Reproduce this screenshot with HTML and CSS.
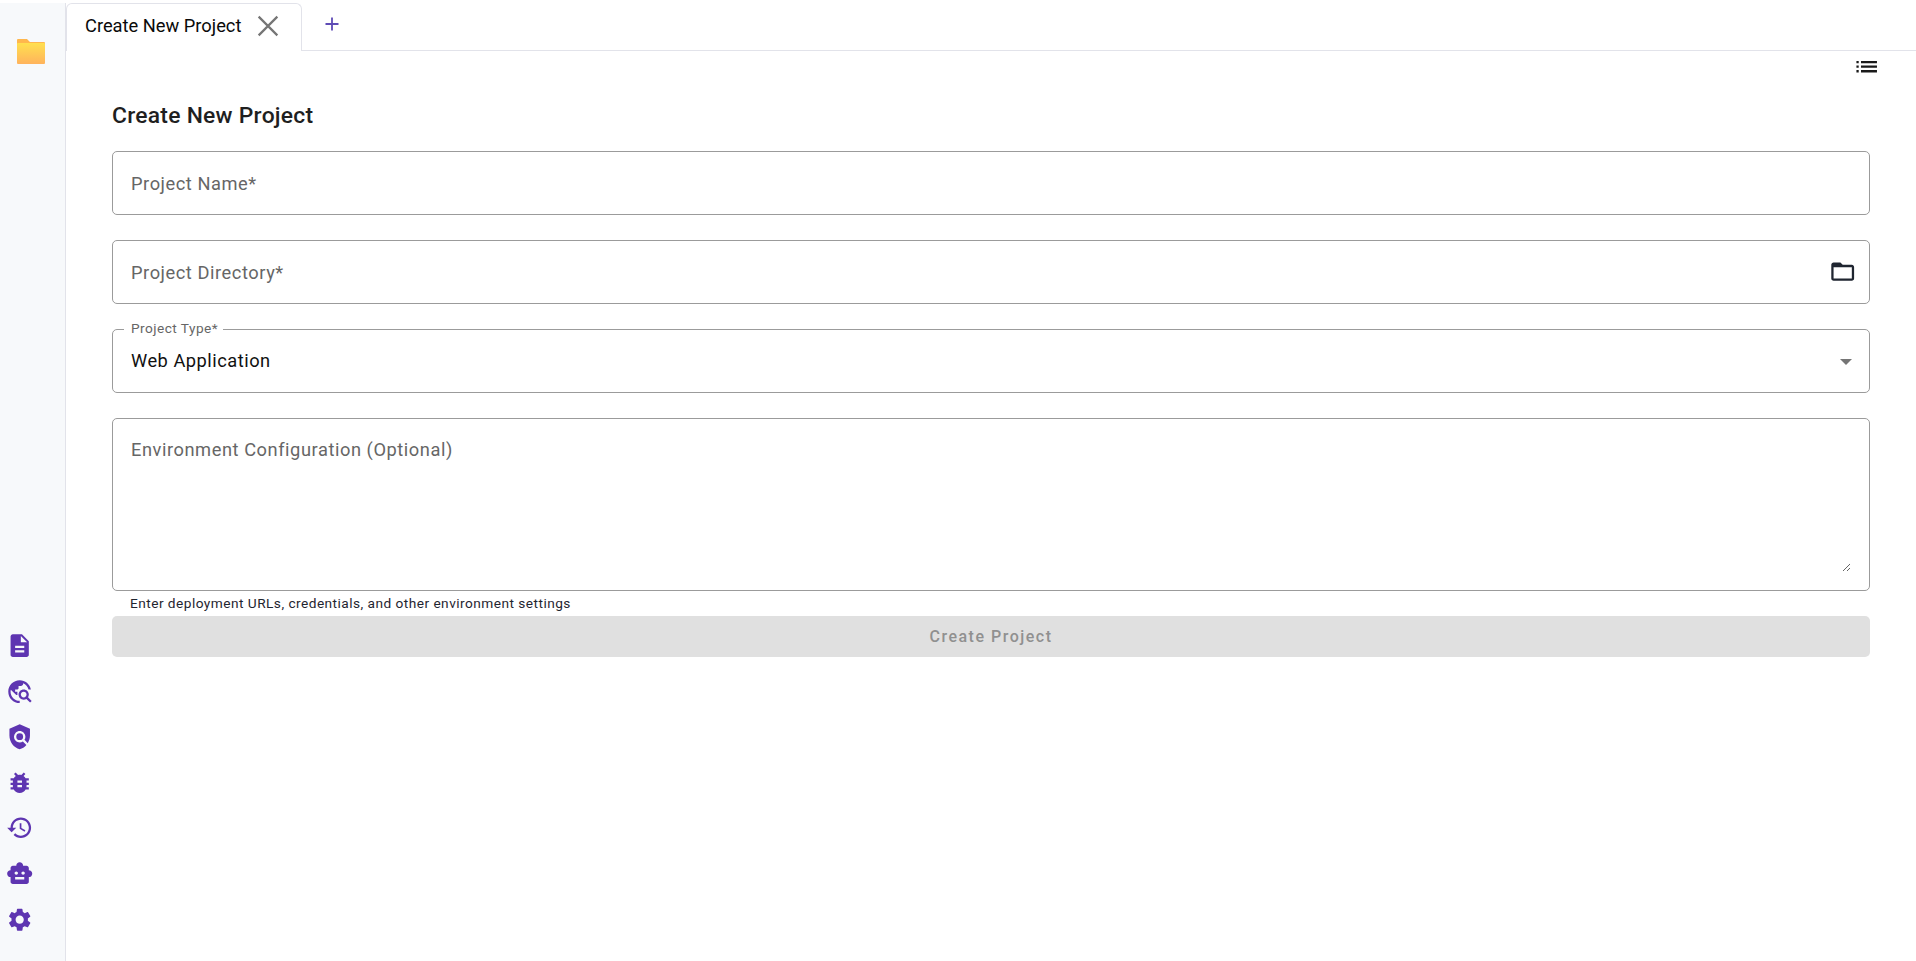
FILE: index.html
```html
<!DOCTYPE html>
<html lang="en">
<head>
<meta charset="utf-8">
<title>Create New Project</title>
<link rel="stylesheet" href="styles.css">
</head>
<body>
<div class="app">
  <aside class="sidebar">
    <svg class="logo" viewBox="0 0 28 25" aria-hidden="true">
      <defs><linearGradient id="fg" x1="0" y1="0" x2="0" y2="1"><stop offset="0" stop-color="#ffe04f"/><stop offset="1" stop-color="#ffb35c"/></linearGradient></defs>
      <path d="M1 0h9l3 3h14a1 1 0 0 1 1 1v2H0V1a1 1 0 0 1 1-1z" fill="#ffb74d"/>
      <path d="M1 4h26a1 1 0 0 1 1 1v19a1 1 0 0 1-1 1H1a1 1 0 0 1-1-1V5a1 1 0 0 1 1-1z" fill="url(#fg)"/>
    </svg>
    <nav class="side-icons">
      <svg class="side-icon" viewBox="0 0 24 24"><path d="M14 2H6c-1.1 0-1.99.9-1.99 2L4 20c0 1.1.89 2 1.99 2H18c1.1 0 2-.9 2-2V8l-6-6zm2 16H8v-2h8v2zm0-4H8v-2h8v2zm-3-5V3.5L18.5 9H13z"/></svg>
      <svg class="side-icon" viewBox="0 0 24 24"><path d="M19.3 16.9c.4-.7.7-1.5.7-2.4 0-2.5-2-4.5-4.5-4.5S11 12 11 14.5s2 4.5 4.5 4.5c.9 0 1.7-.3 2.4-.7l3.2 3.2 1.4-1.4-3.2-3.2zm-3.8.1c-1.4 0-2.5-1.1-2.5-2.5s1.1-2.5 2.5-2.5 2.5 1.1 2.5 2.5-1.1 2.5-2.5 2.5zM12 20v2C6.48 22 2 17.52 2 12S6.48 2 12 2c4.84 0 8.87 3.44 9.8 8h-2.07c-.64-2.46-2.4-4.47-4.73-5.41V5c0 1.1-.9 2-2 2h-2v2c0 .55-.45 1-1 1H8v2h2v3H9l-4.79-4.79C4.08 10.79 4 11.38 4 12c0 4.41 3.59 8 8 8z"/></svg>
      <svg class="side-icon" viewBox="0 0 24 24"><path d="M21 5l-9-4-9 4v6c0 5.55 3.84 10.74 9 12 2.3-.56 4.33-1.9 5.88-3.71l-3.12-3.12c-1.94 1.29-4.58 1.07-6.29-.64-1.95-1.95-1.95-5.12 0-7.07 1.95-1.95 5.12-1.95 7.07 0 1.71 1.71 1.92 4.35.64 6.29l2.9 2.9C20.29 15.69 21 13.38 21 11V5z"/><circle cx="12" cy="12" r="3"/></svg>
      <svg class="side-icon" viewBox="0 0 24 24"><path d="M20 8h-2.81c-.45-.78-1.07-1.45-1.82-1.96L17 4.41 15.59 3l-2.17 2.17C12.96 5.06 12.49 5 12 5c-.49 0-.96.06-1.41.17L8.41 3 7 4.41l1.62 1.63C7.88 6.55 7.26 7.22 6.81 8H4v2h2.09c-.05.33-.09.66-.09 1v1H4v2h2v1c0 .34.04.67.09 1H4v2h2.81c1.04 1.79 2.97 3 5.19 3s4.15-1.21 5.19-3H20v-2h-2.09c.05-.33.09-.66.09-1v-1h2v-2h-2v-1c0-.34-.04-.67-.09-1H20V8zm-6 8h-4v-2h4v2zm0-4h-4v-2h4v2z"/></svg>
      <svg class="side-icon" viewBox="0 0 24 24"><path d="M13 3c-4.97 0-9 4.03-9 9H1l3.89 3.89.07.14L9 12H6c0-3.87 3.13-7 7-7s7 3.13 7 7-3.13 7-7 7c-1.93 0-3.68-.79-4.94-2.06l-1.42 1.42C8.27 19.99 10.51 21 13 21c4.97 0 9-4.03 9-9s-4.03-9-9-9zm-1 5v5l4.28 2.54.72-1.21-3.5-2.08V8H12z"/></svg>
      <svg class="side-icon" viewBox="0 0 24 24"><path d="M20 9V7c0-1.1-.9-2-2-2h-3c0-1.66-1.34-3-3-3S9 3.34 9 5H6c-1.1 0-2 .9-2 2v2c-1.66 0-3 1.34-3 3s1.34 3 3 3v4c0 1.1.9 2 2 2h12c1.1 0 2-.9 2-2v-4c1.66 0 3-1.34 3-3s-1.34-3-3-3zM7.5 11.5c0-.83.67-1.5 1.5-1.5s1.5.67 1.5 1.5S9.83 13 9 13s-1.5-.67-1.5-1.5zM16 17H8v-2h8v2zm-1-4c-.83 0-1.5-.67-1.5-1.5S14.17 10 15 10s1.5.67 1.5 1.5S15.83 13 15 13z"/></svg>
      <svg class="side-icon" viewBox="0 0 24 24"><path d="M19.14 12.94c.04-.3.06-.61.06-.94 0-.32-.02-.64-.07-.94l2.03-1.58c.18-.14.23-.41.12-.61l-1.92-3.32c-.12-.22-.37-.29-.59-.22l-2.39.96c-.5-.38-1.03-.7-1.62-.94l-.36-2.54c-.04-.24-.24-.41-.48-.41h-3.84c-.24 0-.43.17-.47.41l-.36 2.54c-.59.24-1.13.57-1.62.94l-2.39-.96c-.22-.08-.47 0-.59.22L2.74 8.87c-.12.21-.08.47.12.61l2.03 1.58c-.05.3-.09.63-.09.94s.02.64.07.94l-2.03 1.58c-.18.14-.23.41-.12.61l1.92 3.32c.12.22.37.29.59.22l2.39-.96c.5.38 1.03.7 1.62.94l.36 2.54c.05.24.24.41.48.41h3.84c.24 0 .44-.17.47-.41l.36-2.54c.59-.24 1.13-.56 1.62-.94l2.39.96c.22.08.47 0 .59-.22l1.92-3.32c.12-.22.07-.47-.12-.61l-2.01-1.58zM12 15.6c-1.98 0-3.6-1.62-3.6-3.6s1.62-3.6 3.6-3.6 3.6 1.62 3.6 3.6-1.62 3.6-3.6 3.6z"/></svg>
    </nav>
  </aside>
  <main class="main">
    <div class="tabbar">
      <div class="tab">
        <span class="tab-label">Create New Project</span>
        <svg class="tab-close" viewBox="0 0 20 20"><path d="M1.5 1.5l17 17M18.5 1.5l-17 17"/></svg>
      </div>
      <svg class="tab-add" viewBox="0 0 16 16"><path d="M8 1.5v13M1.5 8h13"/></svg>
    </div>
    <div class="toolbar">
      <svg class="list-icon" viewBox="0 0 24 24"><path d="M3 13h2v-2H3v2zm0 4h2v-2H3v2zm0-8h2V7H3v2zm4 4h14v-2H7v2zm0 4h14v-2H7v2zM7 7v2h14V7H7z"/></svg>
    </div>
    <form class="form">
      <h1 class="title">Create New Project</h1>
      <div class="field"><input class="input" type="text" placeholder="Project Name*"></div>
      <div class="field">
        <input class="input" type="text" placeholder="Project Directory*">
        <svg class="field-icon" viewBox="0 0 24 24"><path d="M20 6h-8l-2-2H4c-1.1 0-1.99.9-1.99 2L2 18c0 1.1.9 2 2 2h16c1.1 0 2-.9 2-2V8c0-1.1-.9-2-2-2zm0 12H4V8h16v10z"/></svg>
      </div>
      <div class="field">
        <span class="legend">Project Type*</span>
        <span class="value">Web Application</span>
        <span class="caret"></span>
      </div>
      <div class="area-group">
        <div class="field field-area"><textarea class="textarea" placeholder="Environment Configuration (Optional)"></textarea></div>
        <p class="helper">Enter deployment URLs, credentials, and other environment settings</p>
        <button class="submit" type="button" disabled>Create Project</button>
      </div>
    </form>
  </main>
</div>
</body>
</html>
```

FILE: styles.css
```css
* { box-sizing: border-box; }

html, body { height: 100%; }

body {
  margin: 0;
  background: #fff;
  font-family: Roboto, "Liberation Sans", sans-serif;
  color: #1a1a1a;
}

.app {
  display: flex;
  height: 961px;
  overflow: hidden;
}

.sidebar {
  flex: 0 0 66px;
  margin-top: 3px;
  display: flex;
  flex-direction: column;
  background: #f7f9fb;
  border-right: 1px solid #e2e3ea;
}

.logo {
  width: 28px;
  height: 25px;
  margin: 36px 0 0 17px;
  flex: none;
}

.side-icons {
  margin-top: auto;
  margin-bottom: 28px;
  display: flex;
  flex-direction: column;
  gap: 18.2px;
  padding-left: 6px;
}

.side-icon {
  display: block;
  width: 27.4px;
  height: 27.4px;
  fill: #5e35b1;
}

.main {
  flex: 1;
  min-width: 0;
  display: flex;
  flex-direction: column;
}

.tabbar {
  height: 51px;
  padding-top: 3px;
  display: flex;
  align-items: flex-start;
  border-bottom: 1px solid #e2e3ea;
  flex: none;
}

.tab {
  width: 236px;
  height: 48px;
  display: flex;
  align-items: center;
  padding: 0 0 4px 18px;
  background: #fff;
  border: 1px solid #e2e3ea;
  border-bottom: 0;
  border-radius: 6px 6px 0 0;
}

.tab-label {
  font-size: 18.3px;
  color: #0a0a0a;
  white-space: nowrap;
}

.tab-close {
  width: 22px;
  height: 22px;
  margin-left: 16px;
  fill: none;
  stroke: #757575;
  stroke-width: 2;
}

.tab-add {
  width: 16px;
  height: 16px;
  margin: 13px 0 0 22px;
  fill: none;
  stroke: #5e4bb5;
  stroke-width: 1.8;
}

.toolbar {
  height: 30px;
  padding: 1px 36px 0 0;
  display: flex;
  justify-content: flex-end;
  align-items: center;
  flex: none;
}

.list-icon {
  width: 27.4px;
  height: 27.4px;
  fill: #1a1a1a;
}

.form {
  padding: 17px 46px 0;
  display: flex;
  flex-direction: column;
  gap: 25px;
}

.title {
  margin: 0 0 -8px;
  font-size: 22.86px;
  line-height: 36px;
  font-weight: 500;
  letter-spacing: 0.25px;
  color: #1f1f1f;
}

.field {
  position: relative;
  height: 64px;
  display: flex;
  align-items: center;
  border: 1px solid #9b9b9b;
  border-radius: 5px;
  background: #fff;
}

.input,
.textarea {
  flex: 1;
  min-width: 0;
  border: 0;
  outline: 0;
  background: transparent;
  font-family: inherit;
  font-size: 18.28px;
  letter-spacing: 0.55px;
  color: #111;
}

.input {
  height: 100%;
  padding: 0 17px 0 18px;
}

.input::placeholder,
.textarea::placeholder {
  color: #666;
  opacity: 1;
}

.field-icon {
  width: 27.4px;
  height: 27.4px;
  margin-right: 13px;
  flex: none;
  fill: #1f2530;
}

.legend {
  position: absolute;
  top: -10px;
  left: 11px;
  padding: 0 5px 0 7px;
  background: #fff;
  font-size: 13.7px;
  line-height: 16px;
  letter-spacing: 0.45px;
  color: #666;
}

.value {
  padding: 0 0 2px 18px;
  font-size: 18.28px;
  letter-spacing: 0.5px;
  color: #111;
}

.caret {
  position: absolute;
  right: 17px;
  top: 29px;
  width: 0;
  height: 0;
  border-left: 6px solid transparent;
  border-right: 6px solid transparent;
  border-top: 6px solid #757575;
}

.area-group {
  display: flex;
  flex-direction: column;
}

.field-area {
  height: 173px;
  padding: 17px 18px 18px 18px;
  align-items: stretch;
}

.textarea {
  padding: 0;
  line-height: 27px;
  resize: vertical;
}

.helper {
  margin: 0;
  padding: 2px 0 0 18px;
  height: 25px;
  font-size: 13.7px;
  line-height: 20px;
  letter-spacing: 0.46px;
  color: #1f2530;
}

.submit {
  height: 41px;
  padding: 0 0 1px;
  border: 0;
  border-radius: 5px;
  background: #e0e0e0;
  font-family: inherit;
  font-size: 16px;
  font-weight: 500;
  letter-spacing: 1.5px;
  color: #909090;
}
```
